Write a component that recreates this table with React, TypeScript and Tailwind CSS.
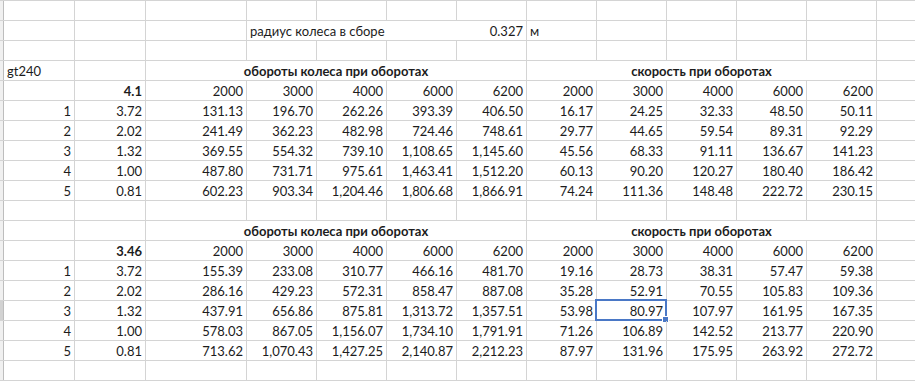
import React from 'react';
import clsx from 'clsx';

// column widths incl. right gridline: A, B, C, D..M
const W: Record<string, string> = {
  A: 'w-[71px]',
  B: 'w-[71px]',
  C: 'w-[101px]',
  n: 'w-[70px]',
  DG: 'w-[280px]',
  CG: 'w-[381px]',
  HL: 'w-[350px]',
};

const rpm = ['2000', '3000', '4000', '6000', '6200'];

const block1 = [
  ['1', '3.72', '131.13', '196.70', '262.26', '393.39', '406.50', '16.17', '24.25', '32.33', '48.50', '50.11'],
  ['2', '2.02', '241.49', '362.23', '482.98', '724.46', '748.61', '29.77', '44.65', '59.54', '89.31', '92.29'],
  ['3', '1.32', '369.55', '554.32', '739.10', '1,108.65', '1,145.60', '45.56', '68.33', '91.11', '136.67', '141.23'],
  ['4', '1.00', '487.80', '731.71', '975.61', '1,463.41', '1,512.20', '60.13', '90.20', '120.27', '180.40', '186.42'],
  ['5', '0.81', '602.23', '903.34', '1,204.46', '1,806.68', '1,866.91', '74.24', '111.36', '148.48', '222.72', '230.15'],
];

const block2 = [
  ['1', '3.72', '155.39', '233.08', '310.77', '466.16', '481.70', '19.16', '28.73', '38.31', '57.47', '59.38'],
  ['2', '2.02', '286.16', '429.23', '572.31', '858.47', '887.08', '35.28', '52.91', '70.55', '105.83', '109.36'],
  ['3', '1.32', '437.91', '656.86', '875.81', '1,313.72', '1,357.51', '53.98', '80.97', '107.97', '161.95', '167.35'],
  ['4', '1.00', '578.03', '867.05', '1,156.07', '1,734.10', '1,791.91', '71.26', '106.89', '142.52', '213.77', '220.90'],
  ['5', '0.81', '713.62', '1,070.43', '1,427.25', '2,140.87', '2,212.23', '87.97', '131.96', '175.95', '263.92', '272.72'],
];

function Cell({
  w,
  align = 'right',
  bold,
  children,
  selected,
}: {
  w: string;
  align?: 'left' | 'right' | 'center';
  bold?: boolean;
  children?: React.ReactNode;
  selected?: boolean;
}) {
  return (
    <div
      className={clsx(
        'relative h-full shrink-0 whitespace-nowrap border-r border-[#d4d4d4] px-[3px] leading-[21px]',
        w,
        align === 'right' && 'text-right',
        align === 'center' && 'text-center',
        bold && 'font-bold',
      )}
    >
      {children}
      {selected && (
        <>
          <div className="absolute -left-[2px] -top-[2px] h-[22px] w-[72px] border-2 border-[#4a78c6]" />
          <div className="absolute -bottom-[3px] -right-[3px] h-[7px] w-[7px] border border-white bg-[#4a78c6]" />
        </>
      )}
    </div>
  );
}

function Row({ children, active }: { children: React.ReactNode; active?: boolean }) {
  return (
    <div className="flex h-[20px] border-b border-[#d4d4d4]">
      <div
        className={clsx(
          'h-full w-[4px] shrink-0 border-r border-[#bdbdbd]',
          active ? 'bg-[#d2d2d2]' : 'bg-[#f0f0f0]',
        )}
      />
      {children}
    </div>
  );
}

function BlankRow() {
  return (
    <Row>
      <Cell w={W.A} />
      <Cell w={W.B} />
      <Cell w={W.C} />
      {Array.from({ length: 10 }).map((_, i) => (
        <Cell key={i} w={W.n} />
      ))}
    </Row>
  );
}

function HeaderRow({ label }: { label?: string }) {
  return (
    <Row>
      <Cell w={W.A} align="left">
        {label}
      </Cell>
      <Cell w={W.B} />
      <Cell w={W.CG} align="center" bold>
        обороты колеса при оборотах
      </Cell>
      <Cell w={W.HL} align="center" bold>
        скорость при оборотах
      </Cell>
      <Cell w={W.n} />
    </Row>
  );
}

function RpmRow({ ratio }: { ratio: string }) {
  return (
    <Row>
      <Cell w={W.A} />
      <Cell w={W.B} bold>
        {ratio}
      </Cell>
      <Cell w={W.C}>{rpm[0]}</Cell>
      {rpm.slice(1).map((r) => (
        <Cell key={'a' + r} w={W.n}>
          {r}
        </Cell>
      ))}
      {rpm.map((r) => (
        <Cell key={'b' + r} w={W.n}>
          {r}
        </Cell>
      ))}
      <Cell w={W.n} />
    </Row>
  );
}

function DataRows({ rows, selRow }: { rows: string[][]; selRow?: number }) {
  return (
    <>
      {rows.map((r, ri) => (
        <Row key={ri} active={ri === selRow}>
          <Cell w={W.A}>{r[0]}</Cell>
          <Cell w={W.B}>{r[1]}</Cell>
          <Cell w={W.C}>{r[2]}</Cell>
          {r.slice(3).map((v, i) => (
            <Cell key={i} w={W.n} selected={ri === selRow && i === 5}>
              {v}
            </Cell>
          ))}
          <Cell w={W.n} />
        </Row>
      ))}
    </>
  );
}

export default function App() {
  return (
    <div
      className="h-[383px] w-[915px] overflow-hidden bg-white text-[13px] text-[#1c1c1c]"
      style={{ fontFamily: '"Lato", "Open Sans", sans-serif' }}
    >
      <div className="border-t border-[#d4d4d4]">
        <BlankRow />
        <Row>
          <Cell w={W.A} />
          <Cell w={W.B} />
          <Cell w={W.C} />
          <div className="flex h-full w-[280px] shrink-0 justify-between whitespace-nowrap border-r border-[#d4d4d4] px-[3px] leading-[21px]">
            <span>радиус колеса в сборе</span>
            <span>0.327</span>
          </div>
          <Cell w={W.n} align="left">
            м
          </Cell>
          {Array.from({ length: 5 }).map((_, i) => (
            <Cell key={i} w={W.n} />
          ))}
        </Row>
        <BlankRow />
        <HeaderRow label="gt240" />
        <RpmRow ratio="4.1" />
        <DataRows rows={block1} />
        <BlankRow />
        <HeaderRow />
        <RpmRow ratio="3.46" />
        <DataRows rows={block2} selRow={2} />
        <BlankRow />
      </div>
    </div>
  );
}
